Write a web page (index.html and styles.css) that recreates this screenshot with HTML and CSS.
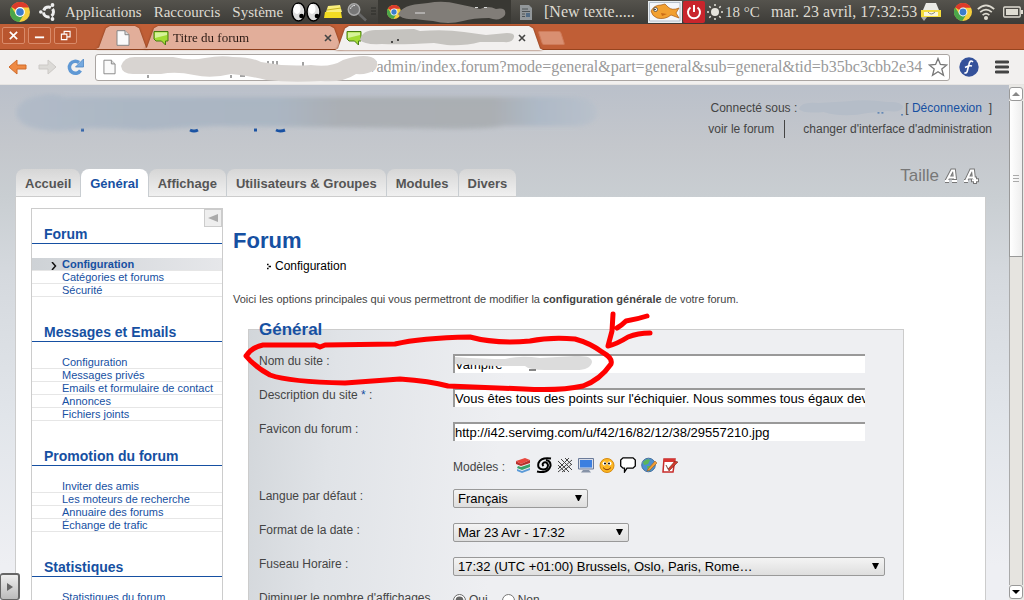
FILE: index.html
```html
<!DOCTYPE html>
<html lang="fr">
<head>
<meta charset="utf-8">
<title>Panneau d'administration</title>
<link rel="stylesheet" href="styles.css">
</head>
<body>
<svg class="defs" aria-hidden="true">
  <symbol id="chrome" viewBox="0 0 20 20">
    <circle cx="10" cy="10" r="10" fill="#f6cf3c"/>
    <path d="M10 10L1.3 5A10 10 0 0 1 18.9 5.4H10Z" fill="#dc3a2b"/>
    <path d="M1.3 5A10 10 0 0 0 9.2 20L14 12.3 6 12.3Z" fill="#4ba64a"/>
    <circle cx="10" cy="10" r="4.9" fill="#fff"/>
    <circle cx="10" cy="10" r="3.8" fill="#3b7dcc"/>
  </symbol>
  <symbol id="bubble" viewBox="0 0 16 16">
    <path d="M1 1.5H15V11H12.5V15L8.500 11H3L1 9Z" fill="#a3dc35" stroke="#477d10"/>
    <path d="M2 2.5H14V5L2 8Z" fill="#d6f39a"/>
  </symbol>
  <symbol id="page" viewBox="0 0 14 16">
    <path d="M1 .7H9L13 4.700V15.300H1Z" fill="#fafafa" stroke="#858585"/>
    <path d="M9 .7V4.700H13" fill="#ddd" stroke="#858585"/>
  </symbol>
</svg>

<header class="panel">
  <div class="panel-group">
    <svg class="i20 logo"><use href="#chrome"/></svg>
    <svg class="i18 ubuntu" viewBox="0 0 18 18" fill="none" stroke="#eee">
      <circle cx="9.500" cy="9" r="5" stroke-width="3" stroke-dasharray="8.500 1.970" stroke-dashoffset="4"/>
      <g fill="#eee" stroke="none"><circle cx="1.800" cy="9" r="1.800"/><circle cx="13.500" cy="2" r="1.900"/><circle cx="13.500" cy="16" r="1.900"/></g>
    </svg>
    <nav class="panel-menu"><a href="#">Applications</a><a href="#">Raccourcis</a><a href="#">Système</a></nav>
    <svg class="eyes" viewBox="0 0 30 20">
      <g fill="#ddd" stroke="#000" stroke-width="1.500"><ellipse cx="7.500" cy="10" rx="6.500" ry="9"/><ellipse cx="22.500" cy="10" rx="6.500" ry="9"/></g>
      <ellipse cx="6" cy="7" rx="3.500" ry="5" fill="#fff"/><ellipse cx="21" cy="7" rx="3.500" ry="5" fill="#fff"/>
      <circle cx="10.500" cy="14" r="2.300"/><circle cx="26" cy="14" r="2.300"/>
    </svg>
    <svg class="i18 folder" viewBox="0 0 18 18"><path d="M4 3L16 2 18 9H2Z" fill="#f9ee7d"/><path d="M1 9H17L18 15H0Z" fill="#f3dc22"/><path d="M3 7L17 5" stroke="#c8b520"/></svg>
    <svg class="i20 lens" viewBox="0 0 20 20"><path d="M11 11L19 18.500" stroke="#666" stroke-width="2.500"/><circle cx="7" cy="7.500" r="5.700" fill="#777" stroke="#aaa" stroke-width="1.500"/><path d="M3.500 7A4 4 0 0 1 8 3.500" stroke="#ddd" fill="none"/></svg>
    <svg class="grip" viewBox="0 0 5 10"><path d="M0 1H5M0 4H5M0 7H5" stroke="#2d2c28"/></svg>
    <div class="task task-on">
      <svg class="i14"><use href="#chrome"/></svg>
      <svg class="task-blot" viewBox="0 0 110 22"><path d="M0 13C5 4 18 3 30 2Q45-1 60 3Q75 6 82 8Q90 4 98 8Q109 6 107 14Q102 21 91 17Q75 17 65 20Q50 24 35 20Q24 19 17 18Q3 19 0 13Z" fill="#817d78"/><path d="M17 12H27M77 6.500H80M86 6.500H89" stroke="#ddd"/></svg>
    </div>
    <div class="task">
      <svg class="task-doc" viewBox="0 0 12 15"><path d="M0 0H9L12 3V15H0Z" fill="#92979a"/><path d="M2 4H8M2 6.500H10M2 9H5M2 11.500H5" stroke="#4d5254"/><path d="M6 8H10V12H6Z" fill="#536c85"/></svg>
      <span class="task-name">[New texte.....</span>
    </div>
  </div>
  <div class="panel-group">
    <svg class="fish" viewBox="0 0 34 22"><path d="M0 0H34V22H0Z" fill="#e8edf0"/><path d="M1.500 1.500H32V20H1.500Z" fill="#f5f7fa" stroke="#b5bfca"/><path d="M3 10Q6 4 13 4L17 3 20 6Q24 10 31 7L28 12 31 17 23 14Q17 19 9 17Q4 15 3 10Z" fill="#f2a030" stroke="#a85a12" stroke-width=".7"/><path d="M13 12L19 13 14 15Z" fill="#c96c18"/><circle cx="7.500" cy="8.500" r="2" fill="#fff" stroke="#333" stroke-width=".7"/><circle cx="7" cy="8.500" r=".8"/></svg>
    <svg class="power" viewBox="0 0 22 22"><rect width="22" height="22" rx="2" fill="#c9252c"/><path d="M7.500 6.500A6 6 0 1 0 14.500 6.500M11 4V11" stroke="#fff" stroke-width="2" fill="none"/></svg>
    <svg class="sun" viewBox="0 0 16 16"><circle cx="8" cy="8" r="4" fill="#e5e3dc"/><path d="M8 0V2M8 14V16M0 8H2M14 8H16M2.300 2.300L3.700 3.700M12.300 12.300L13.700 13.700M13.700 2.300L12.300 3.700M3.700 12.300L2.300 13.700" stroke="#e5e3dc" stroke-width="1.500"/></svg>
    <span class="temp">18 °C</span>
    <span class="clock">mar. 23 avril, 17:32:53</span>
    <svg class="i20 printer" viewBox="0 0 20 20"><path d="M5 1H15L18 8H2Z" fill="#e9e9e4"/><path d="M0 8H20V15H0Z" fill="#f4dc3c"/><path d="M3 10H17V14H3Z" fill="#fbf7d8"/><path d="M7 10Q10 14 14 10" stroke="#888" fill="none"/><path d="M0 15H6L3 19Z" fill="#aaa"/></svg>
    <svg class="i18 tray-chrome"><use href="#chrome"/></svg>
    <svg class="i18 wifi" viewBox="0 0 18 18" stroke="#dfdcd2" stroke-width="1.700" fill="none"><path d="M.8 6.200Q9-1.500 17.200 6.200M3.200 9.200Q9 4 14.800 9.200M5.600 12.200Q9 9.200 12.400 12.200"/><circle cx="9" cy="15" r="1.200" fill="#dfdcd2"/></svg>
    <svg class="battery" viewBox="0 0 20 12"><rect x=".7" y="1" width="16.500" height="10" rx="1" fill="none" stroke="#dfdcd2" stroke-width="1.300"/><path d="M3 3H15V9H3ZM18 4H20V8H18Z" fill="#dfdcd2"/></svg>
  </div>
</header>

<div class="tabstrip">
  <div class="win-buttons">
    <button aria-label="Fermer"><svg viewBox="0 0 12 12"><path d="M2 2L10 10M10 2L2 10" stroke="#fff" stroke-width="1.800"/></svg></button>
    <button aria-label="Réduire"><svg viewBox="0 0 12 12"><path d="M1 8H11" stroke="#fff" stroke-width="2"/></svg></button>
    <button aria-label="Restaurer"><svg viewBox="0 0 12 12"><path d="M4.500 4V1.500H11V7.500H8M1.500 4.500H7.500V10.500H1.500Z" stroke="#fff" fill="none" stroke-width="1.200"/></svg></button>
  </div>
  <div class="tab tab-pinned"><svg class="tab-icon"><use href="#page"/></svg></div>
  <div class="tab tab-wide"><svg class="tab-icon"><use href="#bubble"/></svg><span class="tab-title">Titre du forum</span><button class="tab-close" aria-label="Fermer l'onglet"><svg viewBox="0 0 8 8"><path d="M1 1L7 7M7 1L1 7"/></svg></button></div>
  <div class="tab tab-wide tab-on"><svg class="tab-icon"><use href="#bubble"/></svg><span class="tab-title"></span><button class="tab-close" aria-label="Fermer l'onglet"><svg viewBox="0 0 8 8"><path d="M1 1L7 7M7 1L1 7"/></svg></button>
    <svg class="tab-blot" viewBox="0 0 156 20"><path d="M0 12Q2 1 18 2L54 1 60 3Q85 1 104 4L126 7 147 5Q155 5 154 9Q153 15 144 14L120 14Q105 18 87 17L74 15Q40 17 22 16Q4 17 0 12Z" fill="#c5c3bf"/><path d="M31 14H33M37 12H39" stroke="#222" stroke-width="1.500"/></svg>
  </div>
  <button class="tab-new" aria-label="Nouvel onglet"></button>
</div>

<div class="toolbar">
  <button aria-label="Précédent"><svg class="i20" viewBox="0 0 20 20"><path d="M1 10L9 3V8H18V12H9V17Z" fill="#ef8a43" stroke="#cf6a2a" stroke-linejoin="round"/></svg></button>
  <button aria-label="Suivant"><svg class="i20" viewBox="0 0 20 20"><path d="M19 10L11 3V8H2V12H11V17Z" fill="#dcdad7" stroke="#ccc9c6" stroke-linejoin="round"/></svg></button>
  <button aria-label="Actualiser"><svg class="i20" viewBox="0 0 20 20"><path d="M14.500 13.500A6 6 0 1 1 13 5.500" fill="none" stroke="#5f98d4" stroke-width="3.500"/><path d="M17.500 2V10H9.500Z" fill="#75a9df" stroke="#4d86c4" stroke-width=".8"/></svg></button>
  <div class="omnibox">
    <svg class="omni-page"><use href="#page"/></svg>
    <input aria-label="Adresse" value="/admin/index.forum?mode=general&amp;part=general&amp;sub=general&amp;tid=b35bc3cbb2e34">
    <svg class="i20 star" viewBox="0 0 20 20"><path d="M10 1.500L12.400 7.500 18.800 8 13.800 12 15.500 18.300 10 14.800 4.500 18.300 6.200 12 1.200 8 7.600 7.500Z" fill="#fff" stroke="#777" stroke-width="1.300"/></svg>
    <svg class="omni-blot" viewBox="0 0 265 28"><path d="M27 23V20M110 23V20M119 21H124M147 11V6M152 11V6M156 11V6M182 11V7" stroke="#444"/><path d="M0 11Q3 1 16 2L52 2Q70 6 84 3Q100 0 112 2Q130 2 140 7Q165 12 190 10Q210 13 222 5Q240-1 250 2Q260 6 254 15Q246 20 235 19Q222 28 200 26Q170 28 145 25Q130 21 110 19Q90 24 73 20Q55 16 40 19L12 19Q1 19 0 11Z" fill="#d8d4d1"/></svg>
  </div>
  <button aria-label="Extension"><svg class="i20" viewBox="0 0 20 20"><circle cx="10" cy="10" r="9.700" fill="#34519a"/><path d="M14 5Q11 2 9.800 8L8.300 14Q7.500 17 5.500 15.500M6 10.500Q10 8 13 9" stroke="#fff" stroke-width="1.600" fill="none"/></svg></button>
  <button class="menu-button" aria-label="Menu"><svg class="i14" viewBox="0 0 14 14"><path d="M1 2H13M1 7H13M1 12H13" stroke="#444" stroke-width="2.800" stroke-linecap="round"/></svg></button>
</div>

<div class="viewport">
  <div class="page">
    <div class="top">
      <svg class="title-blot" viewBox="0 0 586 44">
        <defs><linearGradient id="smear"><stop offset="0" stop-color="#b1bbc8"/><stop offset=".2" stop-color="#aab6c4"/><stop offset=".45" stop-color="#a9b5c2"/><stop offset=".56" stop-color="#a9adb2"/><stop offset=".82" stop-color="#a9adb1"/><stop offset=".9" stop-color="#adb9c7"/><stop offset="1" stop-color="#b9c1cb"/></linearGradient><filter id="soft"><feGaussianBlur stdDeviation="2"/></filter></defs>
        <path d="M67 38H70M176 38Q180 40 184 38M240 38H243M262 38Q266 40 271 38" stroke="#1650a2" stroke-width="3"/>
        <path d="M2 20Q5 6 25 4Q40 0 50 5L560 5Q582 5 583 20Q582 34 560 34L490 34Q470 38 400 36L200 34 130 38Q100 36 75 36Q40 42 20 36Q3 32 2 20Z" fill="url(#smear)" opacity=".9" filter="url(#soft)"/>
      </svg>
      <div class="account">
        <div class="account-line"><span>Connecté sous :</span><svg class="user-blot" viewBox="0 0 108 20"><path d="M80 15H82M84 15H86M104 17H106" stroke="#255fa5"/><path d="M0 11Q2 3 20 5L50 3Q70 1 90 4Q104 3 106 9Q104 15 90 13L70 15Q45 20 25 14Q4 16 0 11Z" fill="#b5bdc8"/></svg><span>[&nbsp;<a class="logout" href="#">Déconnexion</a>&nbsp; ]</span></div>
        <div class="account-line"><a class="forum-link" href="#">voir le forum</a><a href="#">changer d'interface d'administration</a></div>
      </div>
    </div>
    <div class="tabs-row">
      <nav class="tabs"><a href="#">Accueil</a><a class="on" href="#">Général</a><a href="#">Affichage</a><a href="#">Utilisateurs &amp; Groupes</a><a href="#">Modules</a><a href="#">Divers</a></nav>
      <div class="sizer"><span>Taille</span>
        <button aria-label="Réduire le texte"><svg viewBox="0 0 16 16"><path d="M2 13H6M3.500 13L9 2.500H11L12 11M6 9.500H11M9 13H14" stroke="#777" stroke-width="4" fill="none"/><path d="M2 13H6M3.500 13L9 2.500H11L12 11M6 9.500H11M9 13H14" stroke="#fff" stroke-width="2" fill="none"/></svg></button>
        <button aria-label="Agrandir le texte"><svg viewBox="0 0 16 16"><path d="M1 13H5M3 13L8 2.500H10L11 11M5 9.500H10M12 8.500V16M8 12.300H16" stroke="#777" stroke-width="4" fill="none"/><path d="M1 13H5M3 13L8 2.500H10L11 11M5 9.500H10M12 9.500V15M9 12.300H15" stroke="#fff" stroke-width="2" fill="none"/></svg></button>
      </div>
    </div>
    <div class="sheet">
      <aside class="side">
        <button class="side-fold" aria-label="Replier"><svg viewBox="0 0 10 8"><path d="M10 0V8L0 4Z" fill="#aaa"/></svg></button>
        <h2>Forum</h2>
        <ul>
          <li class="on"><svg class="chevron" viewBox="0 0 6 8"><path d="M1 0L4.500 4 1 8" fill="none" stroke="#111" stroke-width="1.500"/></svg><a href="#">Configuration</a></li>
          <li><a href="#">Catégories et forums</a></li>
          <li><a href="#">Sécurité</a></li>
        </ul>
        <h2>Messages et Emails</h2>
        <ul>
          <li><a href="#">Configuration</a></li>
          <li><a href="#">Messages privés</a></li>
          <li><a href="#">Emails et formulaire de contact</a></li>
          <li><a href="#">Annonces</a></li>
          <li><a href="#">Fichiers joints</a></li>
        </ul>
        <h2>Promotion du forum</h2>
        <ul>
          <li><a href="#">Inviter des amis</a></li>
          <li><a href="#">Les moteurs de recherche</a></li>
          <li><a href="#">Annuaire des forums</a></li>
          <li><a href="#">Échange de trafic</a></li>
        </ul>
        <h2>Statistiques</h2>
        <ul>
          <li><a href="#">Statistiques du forum</a></li>
        </ul>
      </aside>
      <main class="main">
        <h1>Forum</h1>
        <p class="crumb"><svg viewBox="0 0 5 7"><path d="M0 0H2V2H0ZM2 2.500H5V4.500H2ZM0 5H2V7H0Z"/></svg>Configuration</p>
        <p class="intro">Voici les options principales qui vous permettront de modifier la <b>configuration générale</b> de votre forum.</p>
        <form class="box">
          <h2 class="legend">Général</h2>
          <div class="row"><label for="name">Nom du site :</label>
            <div class="field name-field"><input id="name" type="text" value="Vampire">
              <svg class="name-blot" viewBox="0 0 140 18"><path d="M0 2Q30 4 50 4Q65 0 85 3L120 1Q137 0 137 7Q135 16 118 15L90 15Q74 15 70 11L40 11 0 9Z" fill="#dcdcdc"/><path d="M74 15H81" stroke="#111"/></svg></div></div>
          <div class="row"><label for="desc">Description du site <span class="star-mark">*</span> :</label>
            <div class="field"><input id="desc" type="text" value="Vous êtes tous des points sur l'échiquier. Nous sommes tous égaux devant"></div></div>
          <div class="row"><label for="fav">Favicon du forum :</label>
            <div class="field"><input id="fav" type="text" value="http://i42.servimg.com/u/f42/16/82/12/38/29557210.jpg">
              <div class="models"><span>Modèles :</span>
                <svg viewBox="0 0 16 16"><path d="M1 4L10 1 15 3 6 7Z" fill="#e8483f"/><path d="M1 4V7L6 9 15 6V3L6 7Z" fill="#b9302c"/><path d="M3 9L6 10 15 7V10L7 13 2 11Z" fill="#38a169"/><path d="M2 12L7 14 15 11V13L7 16 2 14Z" fill="#5a9ad8"/></svg>
                <svg viewBox="0 0 16 16" fill="none" stroke="#000" stroke-width="2"><path d="M15 1.500Q5 0 2.500 6Q1 12 7 12.500Q12 12.500 12 8Q11 4.500 8 5.500Q5.500 7 7.500 9"/><path d="M1 14.500Q12 17 14.500 9Q15 4 10 3"/></svg>
                <svg viewBox="0 0 16 16" fill="none" stroke="#444"><path d="M1 4L12 15M4 2L15 13M8 1L15 8M1 8L8 15M1 12L12 1M1 15L15 3M5 15L15 7"/></svg>
                <svg viewBox="0 0 16 16"><path d="M.5 1.500H15.500V12H.5Z" fill="#d8dde8" stroke="#6b7b9a"/><path d="M2 3H14V10.500H2Z" fill="#3c7fe0"/><path d="M5 13H11L13 15.500H3Z" fill="#8793a8"/></svg>
                <svg viewBox="0 0 16 16"><circle cx="8" cy="8.500" r="7" fill="#fcb722" stroke="#d78a10"/><circle cx="5.500" cy="6.500" r="2" fill="#fff"/><circle cx="10.500" cy="6.500" r="2" fill="#fff"/><circle cx="6" cy="6.500" r="1"/><circle cx="10" cy="6.500" r="1"/><path d="M4 10.500Q8 15 12 10.500" stroke="#8a3e08" fill="none"/></svg>
                <svg viewBox="0 0 16 16"><path d="M3 .8H13L15.300 3V9L13 11.200H7L4.500 15V11.200H3L.7 9V3Z" fill="#fff" stroke="#000" stroke-width="1.300"/></svg>
                <svg viewBox="0 0 16 16"><circle cx="7.500" cy="8" r="6.800" fill="#4d8fd0" stroke="#46719f"/><path d="M2 5Q6 1 9 3L7 7 3 8ZM6 9L11 9 9 14Q6 13 6 9Z" fill="#5cb55a"/><path d="M7 12L14 4 16 6 9 13 6 14Z" fill="#ef9d39" stroke="#965614" stroke-width=".5"/></svg>
                <svg viewBox="0 0 16 16"><path d="M2 2H13L11 15H1Z" fill="#fff" stroke="#c72c2b" stroke-width="1.500"/><path d="M2 2H13V5H2Z" fill="#d83531"/><path d="M4 8L6 12 13 4 16 5 7 14Z" fill="#cf3b2e" stroke="#602015" stroke-width=".5"/></svg>
              </div></div></div>
          <div class="row"><label for="lang">Langue par défaut :</label>
            <div class="field"><span class="pick pick-s"><select id="lang"><option>Français</option></select><svg viewBox="0 0 7 6"><path d="M0 0H7L4 6H3Z"/></svg></span></div></div>
          <div class="row"><label for="date">Format de la date :</label>
            <div class="field"><span class="pick pick-m"><select id="date"><option>Mar 23 Avr - 17:32</option></select><svg viewBox="0 0 7 6"><path d="M0 0H7L4 6H3Z"/></svg></span></div></div>
          <div class="row"><label for="zone">Fuseau Horaire :</label>
            <div class="field"><span class="pick pick-l"><select id="zone"><option>17:32 (UTC +01:00) Brussels, Oslo, Paris, Rome…</option></select><svg viewBox="0 0 7 6"><path d="M0 0H7L4 6H3Z"/></svg></span></div></div>
          <div class="row"><span>Diminuer le nombre d'affichages</span>
            <div class="field radios"><label><input type="radio" name="less" checked>Oui</label><label><input type="radio" name="less">Non</label></div></div>
        </form>
      </main>
    </div>
    <svg class="ink" viewBox="0 0 1009 515" fill="none" stroke="#f00" stroke-width="5" stroke-linecap="round" stroke-linejoin="round">
      <path d="M246 271Q252 262 263 260L315 260 320 262 325 260 395 259Q420 253 470 252Q495 259 530 256Q550 252 575 254Q590 258 602 267Q613 273 611 279Q600 295 583 301Q560 306 524 304L448 301Q430 296 400 294L345 298Q290 297 270 290Q255 282 246 271Z"/>
      <path d="M613 229L612 246 608 261Q617 259 628 252 638 248 650 248M617 243Q622 240 626 236 638 234 647 231"/>
    </svg>
    <button class="drawer" aria-label="Ouvrir la barre"><svg viewBox="0 0 6 8"><path d="M0 0V8L6 4Z" fill="#666"/></svg></button>
  </div>
  <div class="scroll">
    <button aria-label="Haut"><svg viewBox="0 0 8 4"><path d="M0 4L4 0 8 4Z" fill="#888"/></svg></button>
    <div class="thumb"><svg viewBox="0 0 6 8"><path d="M0 .5H6M0 3.500H6M0 6.500H6" stroke="#aaa"/></svg></div>
    <div class="track"></div>
    <button aria-label="Bas"><svg viewBox="0 0 8 4"><path d="M0 0L4 4 8 0Z"/></svg></button>
  </div>
</div>
</body>
</html>
```

FILE: styles.css
```css
* { box-sizing: border-box; }
body { margin: 0; height: 100vh; display: flex; flex-direction: column; overflow: hidden; font-family: "Liberation Sans", Arial, sans-serif; color: #444; background: #f1efee; }
h1, h2, p, ul { margin: 0; padding: 0; }
ul { list-style: none; }
a { color: inherit; text-decoration: none; }
button { margin: 0; padding: 0; border: 0; background: none; display: flex; align-items: center; justify-content: center; flex: none; }
svg { flex: none; display: block; }
.defs { position: absolute; width: 0; height: 0; }
.i14 { width: 14px; height: 14px; }
.i18 { width: 18px; height: 18px; }
.i20 { width: 20px; height: 20px; }

/* desktop panel */
.panel { flex: none; height: 24px; display: flex; justify-content: space-between; background: linear-gradient(#55534d, #3c3b37); color: #dfdbd2; font: 15px "Liberation Serif", serif; white-space: nowrap; overflow: hidden; }
.panel-group { display: flex; align-items: center; }
.logo { margin-left: 10px; }
.ubuntu { margin-left: 9px; }
.panel-menu { display: flex; gap: 12px; margin-left: 8px; width: 226px; }
.eyes { width: 30px; height: 20px; }
.folder { margin-left: 3px; }
.lens { margin-left: 5px; }
.grip { width: 5px; height: 10px; margin: 0 2px 0 4px; }
.task { height: 24px; display: flex; align-items: center; gap: 12px; padding-left: 9px; }
.task-on { width: 133px; position: relative; background: #393833; }
.task-blot { position: absolute; left: 20px; top: 1px; width: 110px; height: 22px; }
.task-doc { width: 12px; height: 15px; }
.task-name { font-size: 16px; }
.fish { width: 34px; height: 22px; }
.power { width: 22px; height: 22px; margin: 0 2px 0 1px; }
.sun { width: 16px; height: 16px; margin-right: 2px; }
.temp { width: 46px; }
.clock { width: 150px; font-size: 16px; }
.printer { margin-right: 13px; }
.wifi { margin: 0 8px 0 5px; }
.battery { width: 20px; height: 12px; margin-right: 1px; }

/* browser tabs */
.tabstrip { flex: none; height: 26px; display: flex; align-items: flex-end; background: #c05e36; border-bottom: 1px solid #96441f; font: 13px "Liberation Serif", serif; color: #2b1a14; }
.win-buttons { display: flex; gap: 3px; align-self: flex-start; padding: 3px 0 0 2px; width: 96px; }
.win-buttons button { width: 23px; height: 17px; border: 1px solid #d98a69; border-radius: 2px; background: #b9552e; }
.win-buttons svg { width: 11px; height: 11px; }
.tab { position: relative; height: 23px; display: flex; align-items: center; padding: 0 12px 0 9px; filter: drop-shadow(0 0 1px #7a3719); }
.tab::before { content: ""; position: absolute; inset: 0; z-index: -1; background: #e2ae9a; clip-path: polygon(0 100%, 3px 94%, 10px 10%, 14px 0, calc(100% - 14px) 0, calc(100% - 10px) 10%, calc(100% - 3px) 94%, 100% 100%); }
.tab-pinned { width: 53px; padding-left: 19px; }
.tab-wide { width: 200px; margin-left: -5px; }
.tab-on { z-index: 1; height: 24px; width: 208px; margin: 0 -6px -1px -9px; padding-left: 11px; padding-right: 17px; }
.tab-on::before { background: #f2f0ef; }
.tab-icon { width: 16px; height: 16px; }
.tab-title { flex: 1; padding-left: 4px; }
.tab-close { width: 8px; height: 8px; }
.tab-close svg { width: 8px; height: 8px; stroke: #444; stroke-width: 1.6; }
.tab-blot { position: absolute; left: 25px; top: 2px; width: 156px; height: 20px; }
.tab-new { width: 23px; height: 14px; margin: 0 0 4px 3px; background: #d98f71; border: 1px solid #cf7c5b; border-radius: 2px; transform: skewX(18deg); }

/* browser toolbar */
.toolbar { flex: none; height: 35px; display: flex; align-items: center; gap: 9px; padding: 0 15px 0 8px; background: #f2f0ef; border-bottom: 1px solid #e6e4e2; }
.omnibox { position: relative; flex: 1; height: 27px; display: flex; align-items: center; border: 1px solid #aaa5a2; border-radius: 3px; background: #fff; padding: 0 1px 0 7px; }
.omni-page { width: 13px; height: 16px; }
.omnibox input { flex: 1; min-width: 0; border: 0; padding: 0 0 0 256px; background: none; color: #999; font: 16px "Liberation Serif", serif; outline: 0; }
.omni-blot { position: absolute; left: 25px; top: 0; width: 265px; height: 28px; }
.menu-button { margin-left: 7px; }

/* page */
.viewport { flex: 1; min-height: 0; display: flex; }
.page { position: relative; flex: 1; min-width: 0; overflow: hidden; background: linear-gradient(#bac0ca 0, #c4c7cc 60px, #c9ced2 112px, #d5d9de 190px, #e1e5ea 330px, #eeeff3 480px); font-size: 12px; }
.top { display: flex; justify-content: space-between; height: 84px; padding: 7px 17px 0 14px; }
.title-blot { width: 586px; height: 44px; }
.account { padding-top: 5px; }
.account-line { display: flex; justify-content: flex-end; align-items: center; height: 21px; white-space: nowrap; }
.user-blot { width: 106px; height: 20px; margin-left: 2px; }
.logout { color: #1650a2; }
.forum-link { border-right: 1px solid #444; padding: 2px 10px 2px 0; margin-right: 18px; }
.tabs-row { display: flex; justify-content: space-between; height: 28px; padding: 0 30px 0 16px; }
.tabs { display: flex; gap: 1px; }
.tabs a { height: 28px; padding: 0 9px; border-radius: 8px 8px 0 0; background: linear-gradient(#d6d6d6, #f0f0f0); border-bottom: 1px solid #ccc; font-weight: bold; font-size: 13px; line-height: 29px; color: #555; }
.tabs .on { background: #fff; border-color: #fff; color: #1650a2; }
.sizer { display: flex; align-items: center; gap: 4px; height: 14px; font-size: 17px; color: #777; }
.sizer svg { width: 16px; height: 16px; }
.sheet { display: flex; align-items: flex-start; gap: 10px; min-height: 900px; margin: 0 23px 0 15px; padding: 11px 81px 0 15px; background: #fff; border: solid #ccc; border-width: 0 1px; }
.side { position: relative; flex: none; width: 192px; padding-bottom: 30px; border: 1px solid #ccc; }
.side h2 { margin-top: 27px; padding-left: 12px; border-bottom: 1px solid #1650a2; font-size: 14px; line-height: 17px; color: #1650a2; }
.side-fold + h2 { margin-top: 17px; }
.side ul { margin-top: 14px; font-size: 11px; line-height: 12px; color: #1650a2; }
.side li { position: relative; padding-left: 30px; border-bottom: 1px solid #e6e6e6; }
.side .on { background: linear-gradient(90deg, #ced2d6, #e6e7ea); font-weight: bold; }
.chevron { position: absolute; left: 19px; top: 4px; width: 6px; height: 8px; }
.side-fold { position: absolute; right: 0; top: 0; width: 18px; height: 18px; background: #eee; border: 1px solid #ccc; }
.side-fold svg { width: 10px; height: 8px; }
.main { flex: 1; min-width: 0; padding-top: 20px; }
h1 { font-size: 22px; line-height: 26px; color: #1650a2; }
.crumb { display: flex; align-items: center; gap: 4px; padding: 4px 0 0 34px; line-height: 16px; color: #000; }
.crumb svg { width: 4px; height: 7px; }
.intro { margin-top: 17px; font-size: 11px; line-height: 16px; }
.box { margin: 22px 0 0 15px; padding: 0 10px 30px; border: 1px solid #ccc; background: linear-gradient(95deg, #d2d6da, #e0e3e7 90px, #eeeff2 260px); }
.legend { margin-top: -11px; margin-bottom: 13px; font-size: 17px; line-height: 22px; color: #1650a2; }
.row { display: grid; grid-template-columns: 194px 1fr; align-items: start; padding-bottom: 15px; line-height: 15px; }
.field { min-width: 0; }
.field input[type="text"] { display: block; width: 412px; max-width: 100%; height: 19px; padding: 0; border: solid #999; border-width: 2px 0 0 2px; background: #fff; color: #000; font: 13px "Liberation Sans", Arial, sans-serif; }
.name-field { position: relative; }
.name-blot { position: absolute; left: 2px; top: 1px; width: 140px; height: 18px; }
.star-mark { color: #1650a2; }
.models { display: flex; align-items: center; gap: 5px; height: 18px; margin-top: 15px; }
.models span { width: 57px; padding-top: 5px; }
.models svg { width: 16px; height: 16px; }
.pick { position: relative; display: block; max-width: 100%; }
.pick-s { width: 135px; }
.pick-m { width: 176px; }
.pick-l { width: 432px; }
.pick select { appearance: none; display: block; width: 100%; height: 19px; padding: 0 20px 0 4px; border: 1px solid #999; border-radius: 2px; background: linear-gradient(#f4f4f4, #dedede); color: #000; font: 13px "Liberation Sans", Arial, sans-serif; }
.pick svg { position: absolute; right: 6px; top: 6px; width: 7px; height: 6px; }
.radios { display: flex; gap: 14px; }
.radios label { display: flex; align-items: center; gap: 3px; line-height: 18px; }
.radios input { width: 13px; height: 13px; margin: 0; accent-color: #666; }
.ink { position: absolute; left: 0; top: 0; width: 1009px; height: 515px; pointer-events: none; }
.drawer { position: absolute; left: 0; bottom: 0; width: 20px; height: 27px; border: solid #666; border-width: 2px 2px 1px 1px; border-radius: 3px; background: linear-gradient(#eee, #bbb); }
.drawer svg { width: 6px; height: 8px; }

/* scrollbar */
.scroll { flex: none; width: 15px; display: flex; flex-direction: column; padding: 2px 1px 1px 0; background: #e9e8e5; }
.scroll button { height: 14px; border: 1px solid #999; border-radius: 3px; background: #fff; }
.scroll button svg { width: 8px; height: 4px; }
.thumb { flex: 156 1 0; display: flex; align-items: center; justify-content: center; border: 1px solid #999; border-top: 0; background: linear-gradient(90deg, #fff, #eee); }
.thumb svg { width: 6px; height: 8px; }
.track { flex: 329 1 0; border: solid #aaa; border-width: 0 1px; background: #e6e4e0; }
```
